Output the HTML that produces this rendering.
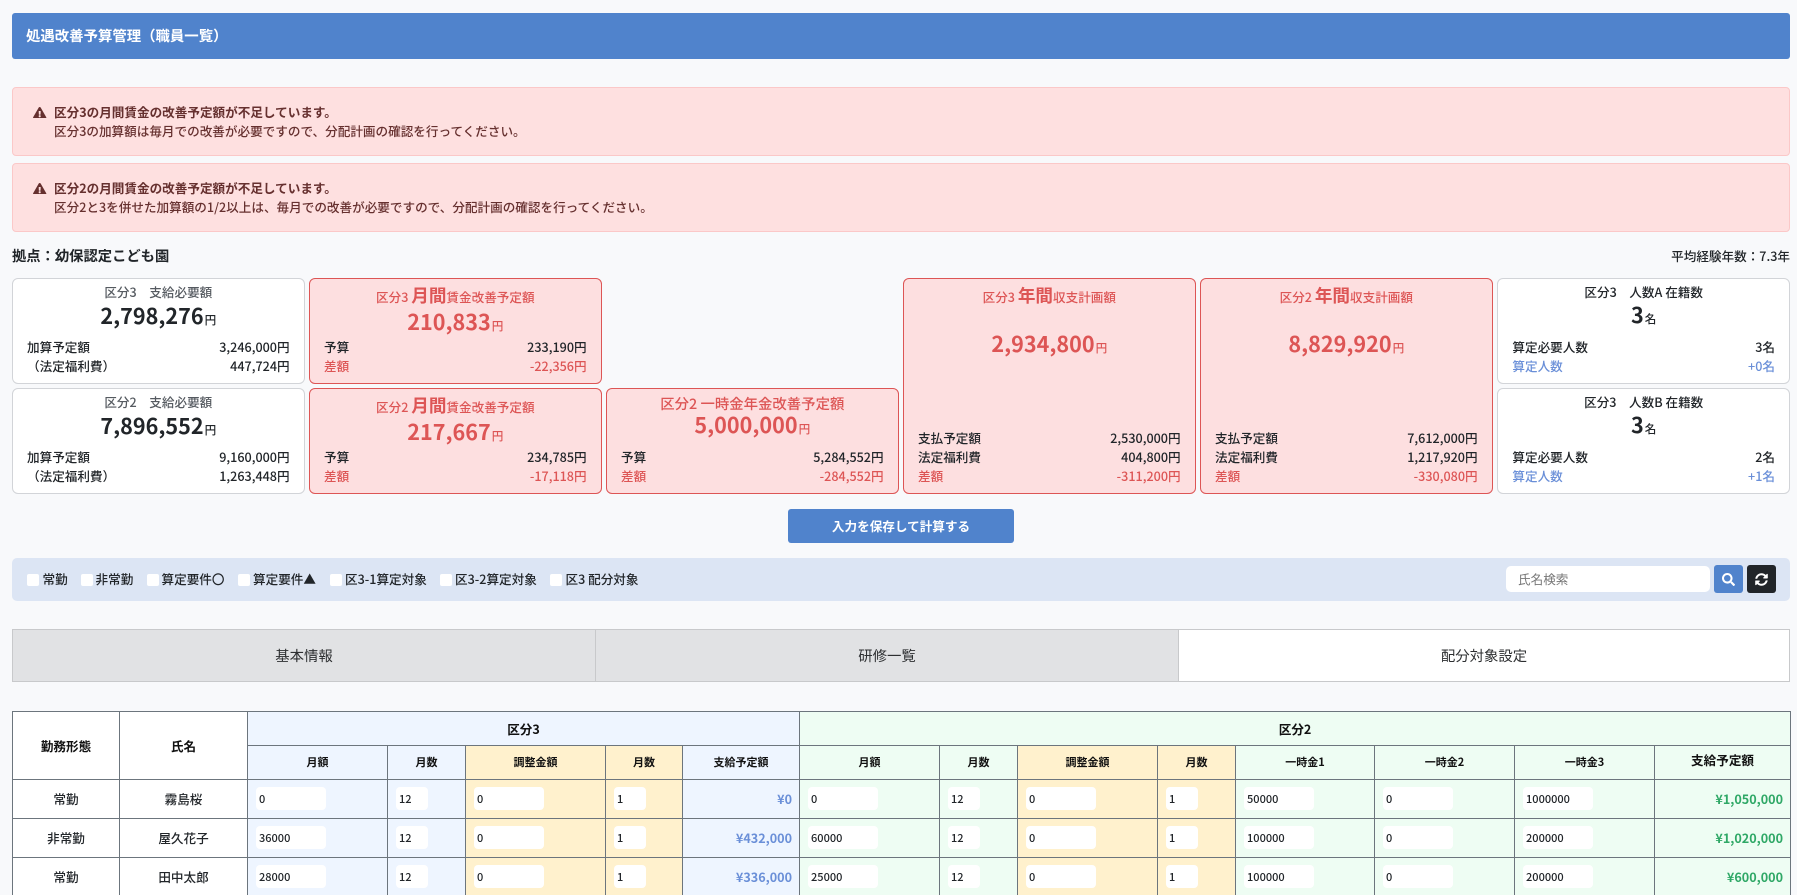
<!DOCTYPE html>
<html lang="ja">
<head>
<meta charset="utf-8">
<title>処遇改善予算管理（職員一覧）</title>
<style>
*{box-sizing:border-box}
html,body{margin:0;padding:0;width:1797px;height:895px;overflow:hidden;background:#f8f9fb}
body{position:relative;font-family:"Noto Sans CJK JP","Noto Sans CJK SC",sans-serif;font-size:12.6px;line-height:19px;color:#212529;font-weight:500}
.abs{position:absolute;white-space:nowrap}
.hdr{left:12px;top:13px;width:1778px;height:46px;background:#5083cc;border-radius:3px;color:#fff;font-weight:700;font-size:14.4px;line-height:46px;padding-left:14px}
.alert{left:12px;width:1778px;height:69px;background:#fee0e0;border:1px solid #fbc8c8;border-radius:4px;color:#66302f}
.alert svg{position:absolute;left:20.4px;top:18.6px;width:13.4px;height:11.8px;fill:#66302f}
.alert b{position:absolute;left:41px;top:13.7px;font-weight:700}
.alert span{position:absolute;left:41px;top:32.7px}
.card{position:absolute;width:292.6px;background:#fff;border:1px solid #d2d4d8;border-radius:6px;height:106px}
.red{background:#fddfe0;border-color:#dd5555;color:#dd5555}
.c{position:absolute;left:0;right:0;text-align:center;white-space:nowrap}
.tt{top:3px;color:#555a60}
.num{top:21.7px;line-height:30px;font-size:21.6px;font-weight:700;color:#212529}
.num small{font-size:11.6px;font-weight:500;margin-left:1px}
.red .num{top:28px;color:#dd5555}
.red .tt{top:4.8px;line-height:24px;color:#dd5555;font-weight:500}
.red .tt em{font-style:normal;font-size:17.6px;font-weight:700}
.r{position:absolute;left:14px;right:14px;display:flex;justify-content:space-between;white-space:nowrap;color:#212529}
.red .r.d{color:#dd5555}
.r.bl{color:#6a8fd8}
.r1{top:57.7px}.r2{top:76.7px}
.lg{height:216px}
.lg .num{top:50px}
.lg .r0{top:148.8px}.lg .r1{top:167.8px}.lg .r2{top:186.8px}
.pp .tt{color:#212529;font-weight:500;top:3px}
.pp .num{top:20.7px}
.btn{left:788px;top:509px;width:226px;height:34px;background:#5083cc;border-radius:3px;color:#fff;font-weight:700;text-align:center;line-height:34px}
.bar{left:12px;top:558px;width:1778px;height:43px;background:#dce5f4;border-radius:5px}
input[type=checkbox]{appearance:none;-webkit-appearance:none;position:absolute;top:574px;width:11.5px;height:11.5px;margin:0;background:#fff;border:0;border-radius:2px}
.lb{top:569px;color:#212529}
.search{position:absolute;left:1506px;top:566px;width:204px;height:26px;background:#fff;border:0;border-radius:5px;padding:0 12px 2px;font:12.6px "Noto Sans CJK JP",sans-serif;outline:0}
.search::placeholder{color:#777;opacity:1}
.ib{position:absolute;top:565px;width:29px;height:28px;border-radius:3px}
.ib svg{position:absolute;left:8px;top:7.5px;width:13px;height:13px;fill:#fff}
.tab{position:absolute;top:629px;height:53px;background:#e1e2e4;border:1px solid #c8c9cb;text-align:center;font-size:14.4px;line-height:52px;color:#2d2f31;font-weight:400}
table{position:absolute;left:12px;top:711px;width:1778px;table-layout:fixed;border-collapse:collapse;background:#fff}
th,td{border:1px solid #6c757d;padding:0;text-align:center;vertical-align:middle}
th{font-weight:700;color:#111}
.s{font-size:11px}
.b{background:#eef5ff}.g{background:#eefdf3}.y{background:#fff1cd}
td.n{font-weight:500;color:#212529}
td input{display:block;margin:0 0 0 7.5px;height:23.5px;border:0;border-radius:4px;background:#fff;padding:0 3.5px;font:500 11px "Noto Sans CJK JP",sans-serif;color:#212529;outline:0}
.w7{width:70px}.w3{width:32px}
td.m{text-align:right;padding-right:7px;font-weight:700;font-size:12.6px}
td.b.m{color:#6a8fd8}td.g.m{color:#2fa866}
</style>
</head>
<body>
<div class="abs hdr">処遇改善予算管理（職員一覧）</div>

<div class="abs alert" style="top:87px">
<svg viewBox="0 0 576 512"><path d="M569.517 440.013C587.975 472.007 564.806 512 527.94 512H48.054c-36.937 0-59.999-40.055-41.577-71.987L246.423 24.028c18.467-32.009 64.72-31.951 83.154 0l239.94 416.985zM288 354c-25.405 0-46 20.595-46 46s20.595 46 46 46 46-20.595 46-46-20.595-46-46-46zm-43.673-165.346l7.418 136c.347 6.364 5.609 11.346 11.982 11.346h48.546c6.373 0 11.635-4.982 11.982-11.346l7.418-136c.375-6.874-5.098-12.654-11.982-12.654h-63.383c-6.884 0-12.356 5.78-11.981 12.654z"/></svg>
<b>区分3の月間賃金の改善予定額が不足しています。</b>
<span>区分3の加算額は毎月での改善が必要ですので、分配計画の確認を行ってください。</span>
</div>
<div class="abs alert" style="top:163px">
<svg viewBox="0 0 576 512"><path d="M569.517 440.013C587.975 472.007 564.806 512 527.94 512H48.054c-36.937 0-59.999-40.055-41.577-71.987L246.423 24.028c18.467-32.009 64.72-31.951 83.154 0l239.94 416.985zM288 354c-25.405 0-46 20.595-46 46s20.595 46 46 46 46-20.595 46-46-20.595-46-46-46zm-43.673-165.346l7.418 136c.347 6.364 5.609 11.346 11.982 11.346h48.546c6.373 0 11.635-4.982 11.982-11.346l7.418-136c.375-6.874-5.098-12.654-11.982-12.654h-63.383c-6.884 0-12.356 5.78-11.981 12.654z"/></svg>
<b>区分2の月間賃金の改善予定額が不足しています。</b>
<span>区分2と3を併せた加算額の1/2以上は、毎月での改善が必要ですので、分配計画の確認を行ってください。</span>
</div>

<div class="abs" style="left:12px;top:245px;font-size:14.3px;line-height:22px;font-weight:700;color:#212529">拠点：幼保認定こども園</div>
<div class="abs" style="right:7px;top:245.5px">平均経験年数：7.3年</div>

<div class="card" style="left:12px;top:278px">
<div class="c tt">区分3　支給必要額</div>
<div class="c num">2,798,276<small>円</small></div>
<div class="r r1"><span>加算予定額</span><span>3,246,000円</span></div>
<div class="r r2"><span>（法定福利費）</span><span>447,724円</span></div>
</div>
<div class="card" style="left:12px;top:388px">
<div class="c tt">区分2　支給必要額</div>
<div class="c num">7,896,552<small>円</small></div>
<div class="r r1"><span>加算予定額</span><span>9,160,000円</span></div>
<div class="r r2"><span>（法定福利費）</span><span>1,263,448円</span></div>
</div>

<div class="card red" style="left:309px;top:278px">
<div class="c tt">区分3 <em>月間</em>賃金改善予定額</div>
<div class="c num">210,833<small>円</small></div>
<div class="r r1"><span>予算</span><span>233,190円</span></div>
<div class="r r2 d"><span>差額</span><span>-22,356円</span></div>
</div>
<div class="card red" style="left:309px;top:388px">
<div class="c tt">区分2 <em>月間</em>賃金改善予定額</div>
<div class="c num">217,667<small>円</small></div>
<div class="r r1"><span>予算</span><span>234,785円</span></div>
<div class="r r2 d"><span>差額</span><span>-17,118円</span></div>
</div>

<div class="card red" style="left:606px;top:388px">
<div class="c tt" style="top:4.5px;line-height:20px;font-size:14.4px">区分2 一時金年金改善予定額</div>
<div class="c num" style="top:21.3px">5,000,000<small>円</small></div>
<div class="r r1"><span>予算</span><span>5,284,552円</span></div>
<div class="r r2 d"><span>差額</span><span>-284,552円</span></div>
</div>

<div class="card red lg" style="left:903px;top:278px">
<div class="c tt">区分3 <em>年間</em>収支計画額</div>
<div class="c num">2,934,800<small>円</small></div>
<div class="r r0"><span>支払予定額</span><span>2,530,000円</span></div>
<div class="r r1"><span>法定福利費</span><span>404,800円</span></div>
<div class="r r2 d"><span>差額</span><span>-311,200円</span></div>
</div>
<div class="card red lg" style="left:1200px;top:278px">
<div class="c tt">区分2 <em>年間</em>収支計画額</div>
<div class="c num">8,829,920<small>円</small></div>
<div class="r r0"><span>支払予定額</span><span>7,612,000円</span></div>
<div class="r r1"><span>法定福利費</span><span>1,217,920円</span></div>
<div class="r r2 d"><span>差額</span><span>-330,080円</span></div>
</div>

<div class="card pp" style="left:1497.4px;top:278px">
<div class="c tt">区分3　人数A 在籍数</div>
<div class="c num">3<small>名</small></div>
<div class="r r1"><span>算定必要人数</span><span>3名</span></div>
<div class="r r2 bl"><span>算定人数</span><span>+0名</span></div>
</div>
<div class="card pp" style="left:1497.4px;top:388px">
<div class="c tt">区分3　人数B 在籍数</div>
<div class="c num">3<small>名</small></div>
<div class="r r1"><span>算定必要人数</span><span>2名</span></div>
<div class="r r2 bl"><span>算定人数</span><span>+1名</span></div>
</div>

<div class="abs btn">入力を保存して計算する</div>

<div class="abs bar"></div>
<input type="checkbox" style="left:27px"><span class="abs lb" style="left:42.5px">常勤</span>
<input type="checkbox" style="left:81px"><span class="abs lb" style="left:95.5px">非常勤</span>
<input type="checkbox" style="left:147px"><span class="abs lb" style="left:161.5px">算定要件〇</span>
<input type="checkbox" style="left:238px"><span class="abs lb" style="left:253px">算定要件▲</span>
<input type="checkbox" style="left:330px"><span class="abs lb" style="left:345px">区3-1算定対象</span>
<input type="checkbox" style="left:440px"><span class="abs lb" style="left:455px">区3-2算定対象</span>
<input type="checkbox" style="left:550px"><span class="abs lb" style="left:565.5px">区3 配分対象</span>

<input class="search" type="text" placeholder="氏名検索">
<div class="ib" style="left:1714px;background:#5083cc"><svg viewBox="0 0 512 512"><path d="M505 442.7L405.3 343c-4.5-4.5-10.6-7-17-7H372c27.6-35.3 44-79.7 44-128C416 93.1 322.9 0 208 0S0 93.1 0 208s93.1 208 208 208c48.3 0 92.7-16.4 128-44v16.3c0 6.4 2.5 12.5 7 17l99.7 99.7c9.4 9.4 24.6 9.4 33.9 0l28.3-28.3c9.4-9.4 9.4-24.6.1-34zM208 336c-70.7 0-128-57.2-128-128 0-70.7 57.2-128 128-128 70.7 0 128 57.2 128 128 0 70.7-57.2 128-128 128z"/></svg></div>
<div class="ib" style="left:1747px;background:#212529"><svg viewBox="0 0 512 512"><path d="M370.72 133.28C339.458 104.008 298.888 87.962 255.848 88c-77.458.068-144.328 53.178-162.791 126.85-1.344 5.363-6.122 9.15-11.651 9.15H24.103c-7.498 0-13.194-6.807-11.807-14.176C33.933 94.924 134.813 8 256 8c66.448 0 126.791 26.136 171.315 68.685L463.03 40.97C478.149 25.851 504 36.559 504 57.941V192c0 13.255-10.745 24-24 24H345.941c-21.382 0-32.09-25.851-16.971-40.971l41.75-41.749zM32 296h134.059c21.382 0 32.09 25.851 16.971 40.971l-41.75 41.75c31.262 29.273 71.835 45.319 114.876 45.28 77.418-.07 144.315-53.144 162.787-126.849 1.344-5.363 6.122-9.15 11.651-9.15h57.304c7.498 0 13.194 6.807 11.807 14.176C478.067 417.076 377.187 504 256 504c-66.448 0-126.791-26.136-171.315-68.685L48.97 471.03C33.851 486.149 8 475.441 8 454.059V320c0-13.255 10.745-24 24-24z"/></svg></div>

<div class="tab" style="left:12px;width:584px">基本情報</div>
<div class="tab" style="left:595px;width:584px">研修一覧</div>
<div class="tab" style="left:1178px;width:612px;background:#fff">配分対象設定</div>

<table>
<colgroup>
<col style="width:107px"><col style="width:128px"><col style="width:140px"><col style="width:78px"><col style="width:140px"><col style="width:77px"><col style="width:117px"><col style="width:140px"><col style="width:78px"><col style="width:140px"><col style="width:78px"><col style="width:139px"><col style="width:140px"><col style="width:140px"><col style="width:136px">
</colgroup>
<tr style="height:33.5px">
<th rowspan="2">勤務形態</th><th rowspan="2">氏名</th>
<th colspan="5" class="b">区分3</th><th colspan="8" class="g">区分2</th>
</tr>
<tr style="height:34px">
<th class="b s">月額</th><th class="b s">月数</th><th class="y s">調整金額</th><th class="y s">月数</th><th class="b s">支給予定額</th>
<th class="g s">月額</th><th class="g s">月数</th><th class="y s">調整金額</th><th class="y s">月数</th>
<th class="g s">一時金1</th><th class="g s">一時金2</th><th class="g s">一時金3</th><th class="g" style="padding-bottom:6px">支給予定額</th>
</tr>
<tr style="height:39px">
<td class="n">常勤</td><td class="n">霧島桜</td>
<td class="b"><input class="w7" value="0"></td><td class="b"><input class="w3" value="12"></td><td class="y"><input class="w7" value="0"></td><td class="y"><input class="w3" value="1"></td><td class="b m">¥0</td>
<td class="g"><input class="w7" value="0"></td><td class="g"><input class="w3" value="12"></td><td class="y"><input class="w7" value="0"></td><td class="y"><input class="w3" value="1"></td>
<td class="g"><input class="w7" value="50000"></td><td class="g"><input class="w7" value="0"></td><td class="g"><input class="w7" value="1000000"></td><td class="g m">¥1,050,000</td>
</tr>
<tr style="height:39px">
<td class="n">非常勤</td><td class="n">屋久花子</td>
<td class="b"><input class="w7" value="36000"></td><td class="b"><input class="w3" value="12"></td><td class="y"><input class="w7" value="0"></td><td class="y"><input class="w3" value="1"></td><td class="b m">¥432,000</td>
<td class="g"><input class="w7" value="60000"></td><td class="g"><input class="w3" value="12"></td><td class="y"><input class="w7" value="0"></td><td class="y"><input class="w3" value="1"></td>
<td class="g"><input class="w7" value="100000"></td><td class="g"><input class="w7" value="0"></td><td class="g"><input class="w7" value="200000"></td><td class="g m">¥1,020,000</td>
</tr>
<tr style="height:39px">
<td class="n">常勤</td><td class="n">田中太郎</td>
<td class="b"><input class="w7" value="28000"></td><td class="b"><input class="w3" value="12"></td><td class="y"><input class="w7" value="0"></td><td class="y"><input class="w3" value="1"></td><td class="b m">¥336,000</td>
<td class="g"><input class="w7" value="25000"></td><td class="g"><input class="w3" value="12"></td><td class="y"><input class="w7" value="0"></td><td class="y"><input class="w3" value="1"></td>
<td class="g"><input class="w7" value="100000"></td><td class="g"><input class="w7" value="0"></td><td class="g"><input class="w7" value="200000"></td><td class="g m">¥600,000</td>
</tr>
</table>
</body>
</html>
